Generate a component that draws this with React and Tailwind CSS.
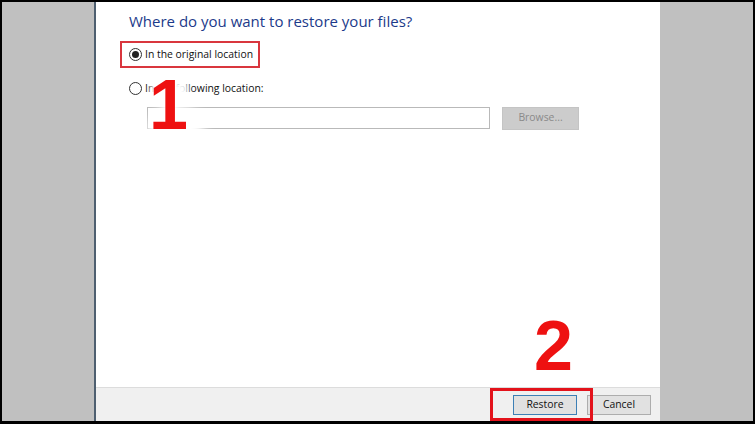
import React from 'react'

const ui = { fontFamily: '"Open Sans", "Liberation Sans", Arial, sans-serif' }
const big = { fontFamily: '"Liberation Sans", Arial, sans-serif' }

function Radio({ checked }) {
  return (
    <span className="flex h-[13px] w-[13px] shrink-0 items-center justify-center rounded-full border border-[#333] bg-white">
      {checked && <span className="h-[7px] w-[7px] rounded-full bg-[#222]" />}
    </span>
  )
}

export default function App() {
  return (
    <div className="h-[424px] w-[755px] overflow-hidden bg-black pt-[2px] pr-[2px] pb-[3px] pl-[2px]" style={ui}>
      <div className="flex h-full">
        <div className="w-[92px] bg-[#c0c0c0]" />
        <div className="w-[2px] bg-[#4e5f70]" />

        <div className="relative flex flex-1 flex-col bg-white">
          <div className="flex-1 pl-[33px] pt-[8px]">
            <h1 className="text-[15px] leading-[22px] text-[#1c3a8a]">Where do you want to restore your files?</h1>

            <div className="mt-[9px] -ml-[9px] inline-flex h-[27px] items-center gap-[3px] border-2 border-[#d9363e] pl-[7px] pr-[5px]">
              <Radio checked />
              <span className="text-[10.4px] text-[#111]">In the original location</span>
            </div>

            <div className="mt-[13px] flex items-center gap-[3px]">
              <Radio />
              <span className="text-[10.4px] text-[#111]">In the following location:</span>
            </div>

            <div className="mt-[10px] ml-[18px] flex items-center gap-[12px]">
              <div className="h-[22px] w-[343px] border border-[#b9b9b9] bg-white" />
              <div className="flex h-[23px] w-[77px] items-center justify-center border border-[#c4c4c4] bg-[#cccccc] text-[10.4px] text-[#8a8a8a]">
                Browse...
              </div>
            </div>
          </div>

          <div className="flex h-[34px] items-center justify-end gap-[10px] border-t border-[#dcdcdc] bg-[#f0f0f0] pr-[9px]">
            <div className="flex h-[20px] w-[64px] items-center justify-center border border-[#3d7fb5] bg-[#e1e1e1] text-[10.4px] text-[#111]">
              Restore
            </div>
            <div className="flex h-[20px] w-[64px] items-center justify-center border border-[#adadad] bg-[#e1e1e1] text-[10.4px] text-[#111]">
              Cancel
            </div>
          </div>

          {/* annotation: step 1 */}
          <div className="absolute left-[56px] top-[80px] h-[18px] w-[36px] bg-white blur-[3px]" />
          <div className="absolute left-[52px] top-[102px] h-[90px] w-[56px] rounded-full bg-white blur-[6px]" />
          <div
            className="absolute left-[53px] top-[68px] text-[70px] font-bold leading-none text-[#ee1111]"
            style={{ ...big, textShadow: '0 0 6px #fff, 0 0 10px #fff' }}
          >
            1
          </div>

          {/* annotation: step 2 */}
          <div
            className="absolute left-[438px] top-[309px] text-[70px] font-bold leading-none text-[#ee1111]"
            style={{ ...big, textShadow: '0 0 6px #fff' }}
          >
            2
          </div>
          <div className="absolute bottom-0 left-[394px] h-[33px] w-[103px] border-[3px] border-[#e3121b]" />
        </div>

        <div className="w-[93px] bg-[#c0c0c0]" />
      </div>
    </div>
  )
}
